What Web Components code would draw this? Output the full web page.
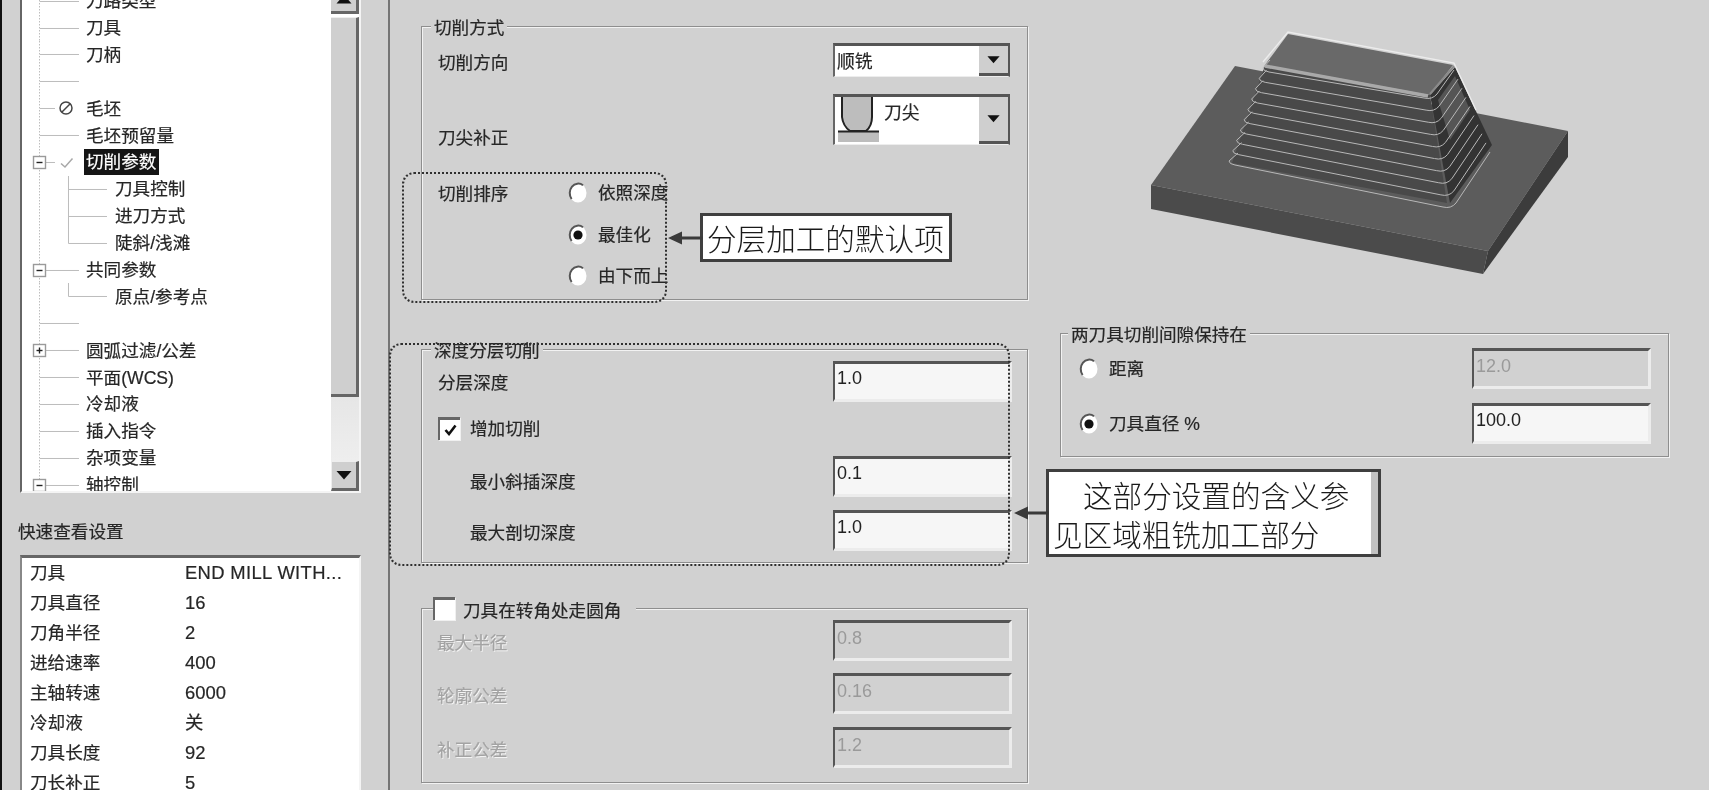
<!DOCTYPE html>
<html lang="zh"><head><meta charset="utf-8"><title>切削参数</title>
<style>
html,body{margin:0;padding:0;height:790px;overflow:hidden;background:#d1d1d1}
</style></head><body>
<cam-app>
  <cam-sidebar slot="side">
    <cam-tree>
      <cam-row text="刀路类型"></cam-row>
      <cam-row text="刀具"></cam-row>
      <cam-row text="刀柄"></cam-row>
      <cam-row></cam-row>
      <cam-row text="毛坯" icon="ban"></cam-row>
      <cam-row text="毛坯预留量"></cam-row>
      <cam-row text="切削参数" icon="check" exp="minus" selected></cam-row>
      <cam-row text="刀具控制" level="1"></cam-row>
      <cam-row text="进刀方式" level="1"></cam-row>
      <cam-row text="陡斜/浅滩" level="1" last></cam-row>
      <cam-row text="共同参数" exp="minus"></cam-row>
      <cam-row text="原点/参考点" level="1" last></cam-row>
      <cam-row></cam-row>
      <cam-row text="圆弧过滤/公差" exp="plus"></cam-row>
      <cam-row text="平面(WCS)"></cam-row>
      <cam-row text="冷却液"></cam-row>
      <cam-row text="插入指令"></cam-row>
      <cam-row text="杂项变量"></cam-row>
      <cam-row text="轴控制" exp="minus"></cam-row>
    </cam-tree>
    <span slot="title">快速查看设置</span>
    <cam-list>
      <cam-item name="刀具" value="END MILL WITH..."></cam-item>
      <cam-item name="刀具直径" value="16"></cam-item>
      <cam-item name="刀角半径" value="2"></cam-item>
      <cam-item name="进给速率" value="400"></cam-item>
      <cam-item name="主轴转速" value="6000"></cam-item>
      <cam-item name="冷却液" value="关"></cam-item>
      <cam-item name="刀具长度" value="92"></cam-item>
      <cam-item name="刀长补正" value="5"></cam-item>
    </cam-list>
  </cam-sidebar>
  <cam-main slot="main">
    <div slot="left">
      <cam-group legend="切削方式" h="274" style="--pt:16px">
        <cam-field pad="16" h="34" shift="5" label="切削方向"><cam-select slot="control" text="顺铣" h="34"></cam-select></cam-field>
        <cam-field pad="16" h="51" mt="17" valign="end" drop="2" label="刀尖补正"><cam-select slot="control" text="刀尖" h="51" tip></cam-select></cam-field>
        <cam-sort>
          <span slot="label">切削排序</span>
          <cam-radio>依照深度</cam-radio>
          <cam-radio checked style="margin-top:18px">最佳化</cam-radio>
          <cam-radio style="margin-top:17px">由下而上</cam-radio>
        </cam-sort>
      </cam-group>
      <cam-group legend="深度分层切削" h="214" style="--pt:11px;--mt:49px">
        <cam-field pad="16" h="41" shift="2" label="分层深度"><cam-input slot="control" value="1.0"></cam-input></cam-field>
        <cam-check checked mt="15" ml="16">增加切削</cam-check>
        <cam-field pad="48" h="41" mt="16" shift="10" label="最小斜插深度"><cam-input slot="control" value="0.1"></cam-input></cam-field>
        <cam-field pad="48" h="41" mt="13" shift="5" label="最大剖切深度"><cam-input slot="control" value="1.0"></cam-input></cam-field>
      </cam-group>
      <cam-group h="175" style="--pt:0px;--mt:45px">
        <cam-check slot="legend-el" label-shift="5" gap="8">刀具在转角处走圆角</cam-check>
        <cam-field pad="15" h="41" shift="5" disabled label="最大半径"><cam-input slot="control" value="0.8" disabled></cam-input></cam-field>
        <cam-field pad="15" h="41" mt="12" shift="5" disabled label="轮廓公差"><cam-input slot="control" value="0.16" disabled></cam-input></cam-field>
        <cam-field pad="15" h="41" mt="13" shift="5" disabled label="补正公差"><cam-input slot="control" value="1.2" disabled></cam-input></cam-field>
      </cam-group>
    </div>
    <div slot="right">
      <cam-part></cam-part>
      <cam-group legend="两刀具切削间隙保持在" h="124" w="609" style="--pt:14px;--lgx:7px">
        <cam-field pad="18" h="41"><cam-radio>距离</cam-radio><cam-input slot="control" value="12.0" disabled></cam-input></cam-field>
        <cam-field pad="18" h="41" mt="14"><cam-radio checked>刀具直径 %</cam-radio><cam-input slot="control" value="100.0"></cam-input></cam-field>
      </cam-group>
    </div>
    <cam-dashed slot="over" style="left:12px;top:172px;width:265px;height:131px"></cam-dashed>
    <cam-dashed slot="over" style="left:-1px;top:343px;width:621px;height:223px"></cam-dashed>
    <cam-callout slot="over" style="left:310px;top:213px;width:252px;height:49px">分层加工的默认项</cam-callout>
    <cam-callout slot="over" band style="left:656px;top:469px;width:335px;height:88px"><span style="padding-left:30px">这部分设置的含义参</span><br>见区域粗铣加工部分</cam-callout>
  </cam-main>
</cam-app>
<script>
const FONT='"Liberation Sans","Noto Sans CJK SC",sans-serif';
const LINE='#bdbdbd';
function def(name,render,after){
  customElements.define(name,class extends HTMLElement{
    connectedCallback(){
      if(this.shadowRoot)return;
      const r=this.attachShadow({mode:'open'});
      r.innerHTML=render(this);
      if(after)after(this,r);
    }
  });
}
const a=(el,n,d='')=>el.hasAttribute(n)?el.getAttribute(n):d;

def('cam-app',()=>`<style>
:host{display:flex;width:1709px;height:790px;overflow:hidden;background:#d1d1d1;color:#262626;
font:17.6px/18px ${FONT};filter:blur(.45px);-webkit-text-stroke:.2px currentColor}
.strip{width:2px;background:#111;flex:none}
.rule{width:2px;background:#757575;flex:none}
</style><div class="strip"></div><slot name="side"></slot><div class="rule"></div><slot name="main"></slot>`);

def('cam-sidebar',()=>`<style>
:host{display:block;width:386px;flex:none;padding-left:18px;box-sizing:border-box;margin-top:-12.4px}
.title{margin:30px 0 14px -2px;height:18px;white-space:nowrap}
</style><slot name="t"></slot><div class="title"><slot name="title"></slot></div><slot name="l"></slot>`,(el)=>{
  el.querySelector('cam-tree').slot='t';
  el.querySelector('cam-list').slot='l';
});

const up=`<svg width="16" height="9" viewBox="0 0 16 9"><path d="M8 0 15.5 8.5H.5Z" fill="#111"/></svg>`;
const down=`<svg width="16" height="9" viewBox="0 0 16 9"><path d="M8 8.5 15.5 0H.5Z" fill="#111"/></svg>`;
def('cam-tree',()=>`<style>
:host{display:flex;width:341px;height:505.4px;background:#fff;box-sizing:border-box;border-left:2px solid #666;border-right:2px solid #f4f4f4;border-bottom:2px solid #f4f4f4;overflow:hidden}
.rows{flex:1;min-width:0;overflow:hidden}
.bar{width:28px;flex:none;display:flex;flex-direction:column;background:#fff}
.btn{background:#cfcfcf;border-right:3px solid #666;border-bottom:3px solid #666;box-sizing:border-box;display:flex;justify-content:center;flex:none}
.u{height:26.4px;align-items:flex-end;padding-bottom:7px}
.thumb{margin-top:3px;height:380px;background:#cfcfcf;border-right:3px solid #666;border-bottom:3px solid #666;box-sizing:border-box;flex:none;border-top:1px solid #eee}
.track{flex:1;background:linear-gradient(#e6e6e6,#eeeeee)}
.d{height:30px;align-items:center;border-top:1px solid #eee;border-left:1px solid #eee}
</style><div class="rows"><slot></slot></div>
<div class="bar"><div class="btn u">${up}</div><div class="thumb"></div><div class="track"></div><div class="btn d">${down}</div></div>`);

def('cam-row',el=>{
  const lvl=+a(el,'level','0'),t=a(el,'text'),exp=a(el,'exp'),ic=a(el,'icon'),sel=el.hasAttribute('selected'),last=el.hasAttribute('last');
  const w=lvl?91:62,h=26.9,m=13.5;
  let s=`<path d="M17.5 0V27" stroke="${LINE}" stroke-dasharray="1.5 1.5" fill="none"/>`;
  if(lvl)s+=`<path d="M46.5 0V${last?m:27}M46.5 ${m}H85" stroke="${LINE}" fill="none"/>`;
  else s+=`<path d="M18 ${m}H${ic?33:57}" stroke="${LINE}" fill="none"/>`;
  if(exp){
    s+=`<rect x="11.5" y="7.5" width="12" height="12" fill="#fff" stroke="#9a9a9a" stroke-width="1.4"/><path d="M14.5 ${m}H20.5" stroke="#222" stroke-width="1.4"/>`;
    if(exp==='plus')s+=`<path d="M17.5 10.5V16.5" stroke="#222" stroke-width="1.4"/>`;
  }
  if(ic==='ban')s+=`<circle cx="44" cy="13" r="6" fill="none" stroke="#444" stroke-width="1.5"/><path d="M40 17 48 9" stroke="#444" stroke-width="1.5"/>`;
  if(ic==='check')s+=`<path d="M39 14.5 43 18 50.5 9.5" fill="none" stroke="#a8a8a8" stroke-width="1.5"/>`;
  return `<style>
:host{display:flex;height:${h}px;align-items:center;white-space:nowrap}
svg{flex:none;display:block}
.t{padding:0 3px 0 2px;line-height:26px;height:26px}
.sel{background:#151515;color:#fff}
</style><svg width="${w}" height="${h}" viewBox="0 0 ${w} ${h}">${s}</svg>${t?`<span class="t ${sel?'sel':''}">${t}</span>`:''}`;
});

def('cam-list',()=>`<style>
:host{display:block;width:341px;height:300px;background:#fff;box-sizing:border-box;border-top:3px solid #666;border-left:2px solid #888;border-right:2px solid #f4f4f4;padding-left:8px}
</style><slot></slot>`);
def('cam-item',el=>`<style>
:host{display:grid;grid-template-columns:155px 1fr;height:30px;align-items:center;white-space:nowrap}
.v{font-size:18.4px;${a(el,'value').length>6?'letter-spacing:.35px;':''}}
</style><span>${a(el,'name')}</span><span class="v">${a(el,'value')}</span>`);

def('cam-main',()=>`<style>
:host{display:flex;position:relative;flex:1;min-width:0;padding-left:31px;box-sizing:border-box;gap:32px;align-items:flex-start}
::slotted([slot=left]){width:607px;flex:none;padding-top:26px}
::slotted([slot=right]){width:609px;flex:none}
</style><slot name="left"></slot><slot name="right"></slot><slot name="over"></slot>`);

def('cam-group',el=>{
  const l=a(el,'legend');
  return `<style>
:host{display:block;box-sizing:border-box;height:${a(el,'h')}px;${el.hasAttribute('w')?'':'width:607px;'}margin-top:var(--mt,0);
border:1px solid #8e8e8e;box-shadow:1px 1px 0 #f2f2f2,inset 1px 1px 0 #f2f2f2}
.lg{display:table;background:#d1d1d1;line-height:18px;height:18px;padding:0 3px;margin:-8px 0 -10px var(--lgx,9px);white-space:nowrap}
.le{display:table;background:#d1d1d1;margin:-12px 0 0 11px;padding-right:15px}
.body{padding-top:var(--pt,0)}
</style>${l?`<div class="lg">${l}</div>`:`<div class="le"><slot name="legend-el"></slot></div>`}<div class="body"><slot></slot></div>`;
});

def('cam-field',el=>{
  const dis=el.hasAttribute('disabled'),v=a(el,'valign','center');
  return `<style>
:host{display:grid;grid-template-columns:411px 179px;height:${a(el,'h')}px;margin-top:${a(el,'mt','0')}px;white-space:nowrap}
.l{padding-left:${a(el,'pad','16')}px;padding-top:${a(el,'shift','0')}px;display:flex;align-items:${v==='end'?'flex-end':'center'};box-sizing:border-box;margin-bottom:-${a(el,'drop','0')}px;
${dis?'color:#a3a3a3;text-shadow:1px 1px 0 #f4f4f4;':''}}
</style><div class="l">${a(el,'label')}<slot></slot></div><slot name="control"></slot>`;
});

def('cam-input',el=>{
  const dis=el.hasAttribute('disabled');
  return `<style>
:host{display:block;box-sizing:border-box;height:41px;width:179px;border-top:3px solid #555;border-left:2px solid #555;border-right:3px solid #ececec;border-bottom:3px solid #ececec;
background:${dis?'#d1d1d1':'#f6f6f6'};color:${dis?'#9a9a9a':'#222'};font-size:18px;line-height:20px;padding:${dis?5:4}px 0 0 2px;-webkit-text-stroke:0}
</style>${a(el,'value')}`;
});

def('cam-select',el=>{
  const tip=el.hasAttribute('tip'),h=+a(el,'h','34');
  const icon=tip?`<svg width="41" height="45" viewBox="0 0 41 45" style="flex:none;display:block">
<rect width="41" height="45" fill="#fff"/><rect y="35" width="41" height="10" fill="#bdbdbd"/>
<path d="M4 0V20Q5 29 12 34H28Q34 29 34 20V0Z" fill="#bdbdbd"/>
<path d="M4 0V20Q5 29 12 34H28Q34 29 34 20V0" fill="none" stroke="#222" stroke-width="2"/>
<path d="M0 34.5H41" fill="none" stroke="#222" stroke-width="2"/></svg>`:'';
  return `<style>
:host{display:flex;box-sizing:border-box;height:${h}px;width:177px;background:#fff;border-top:3px solid #555;border-left:2px solid #666;border-right:2px solid #555;border-bottom:1px solid #ededed}
.t{flex:1;display:flex;gap:5px;padding-left:${tip?3:2}px;line-height:18px;align-items:${tip?'flex-start':'center'};font-size:17.8px;white-space:nowrap}
.s{padding-top:${tip?7:2}px}
.b{width:29px;flex:none;background:#cfcfcf;border-bottom:3px solid #555;display:flex;align-items:center;justify-content:center;box-sizing:border-box}
</style><div class="t">${icon}<span class="s">${a(el,'text')}</span></div><div class="b">${down.replace('width="16"','width="13"').replace('height="9"','height="8"')}</div>`;
});

def('cam-radio',el=>{
  const on=el.hasAttribute('checked');
  return `<style>
:host{display:flex;align-items:center;gap:10px;height:24px;white-space:nowrap;font-size:17.6px}
svg{flex:none;display:block}
</style><svg width="20" height="22" viewBox="0 0 20 22"><ellipse cx="10" cy="11" rx="8.5" ry="9.5" fill="#fff"/>
<path d="M15 3.2A8.5 9.5 0 0 0 3.6 17" fill="none" stroke="#555" stroke-width="2"/>
${on?'<circle cx="10" cy="11" r="4.6" fill="#111"/>':''}</svg><span><slot></slot></span>`;
});

def('cam-check',el=>{
  const on=el.hasAttribute('checked');
  return `<style>
:host{display:flex;align-items:center;gap:${a(el,'gap','10')}px;height:23px;margin-top:${a(el,'mt','0')}px;margin-left:${a(el,'ml','0')}px;white-space:nowrap}
.b{width:22px;height:23px;flex:none;box-sizing:border-box;background:#fff;border-top:3px solid #666;border-left:2px solid #666;display:flex;align-items:center;justify-content:center;box-shadow:1px 1px 0 #f0f0f0}
svg{display:block}
span.l{padding-top:${a(el,'label-shift','0')}px}
</style><div class="b">${on?'<svg width="13" height="12" viewBox="0 0 13 12"><path d="M1.5 6 5 10 11.5 1.5" fill="none" stroke="#111" stroke-width="2.6"/></svg>':''}</div><span class="l"><slot></slot></span>`;
});

def('cam-sort',()=>`<style>
:host{display:grid;grid-template-columns:130px 1fr;margin-top:36px;padding-left:16px;box-sizing:border-box;width:260px;height:100px;white-space:nowrap}
.l{padding-top:4px}
.r{display:flex;flex-direction:column}
</style><div class="l"><slot name="label"></slot></div><div class="r"><slot></slot></div>`);

def('cam-dashed',()=>`<style>
:host{position:absolute;box-sizing:border-box;border:2px dotted #2f2f2f;border-radius:12px;pointer-events:none}
</style>`);

def('cam-callout',el=>`<style>
:host{position:absolute;box-sizing:border-box;background:#fff;border:3px solid #3f3f3f;-webkit-text-stroke:0;
${el.hasAttribute('band')?'box-shadow:inset -7px 0 0 #c2c2c2;':''}
font:300 29.6px/39px "Noto Sans CJK SC",sans-serif;color:#1a1a1a;padding:${el.hasAttribute('band')?'3px 0 0 4px':'2px 0 0 4px'};white-space:nowrap}
.arrow{position:absolute;right:100%;top:50%;width:35px;height:16px;margin-top:-8px}
</style><svg class="arrow" viewBox="0 0 35 16"><path d="M0 8 14 1.5V6.5H35V9.5H14V14.5Z" fill="#3a3a3a"/></svg><slot></slot>`);

def('cam-part',()=>{
  let lines='';
  for(let i=0;i<10;i++){
    const t=i/9,lerp=(p,q)=>p+(q-p)*t;
    const bx=lerp(150,118),by=lerp(50,143);
    const lx=lerp(144,110),ly=lerp(60,153);
    const fx=lerp(312,331),fy=lerp(90,199);
    const rx=lerp(334,370),ry=lerp(60,142);
    lines+=`<path d="M${bx} ${by}L${lx-1} ${ly-2}Q${lx-1} ${ly+1} ${lx+5} ${ly+2}L${fx-8} ${fy-2}Q${fx} ${fy} ${fx+5} ${fy-6}L${rx} ${ry}" />`;
  }
  return `<style>
:host{display:block;width:480px;height:280px;margin:10px 0 43px 60px}
svg{display:block}
</style><svg width="480" height="280" viewBox="0 0 480 280">
<path d="M31 175 115 56 448 121 368 241Z" fill="#5c5c5c"/>
<path d="M31 175 368 241 363 264 31 199Z" fill="#4b4b4b"/>
<path d="M368 241 448 121V147L363 264Z" fill="#3c3c3c"/>
<path d="M145 55 168 24 333 55 310 85Z" fill="#696969"/>
<path d="M145 55 310 85 327 193 112 153Z" fill="#494949"/>
<path d="M310 85 335 57 372 135 330 193Z" fill="#333"/>
<path d="M318 90 335 66 350 100 330 130Z" fill="#555"/>
<path d="M145 56 308 86" stroke="#a9a9a9" stroke-width="3.5" fill="none"/>
<path d="M310 84 334 56" stroke="#8a8a8a" stroke-width="2" fill="none"/>
<path d="M143 52 168 22 334 53 356 100" stroke="#ececec" stroke-width="1.4" fill="none"/>
<g fill="none" stroke="#b8b8b8" stroke-width="1" stroke-linejoin="round">${lines}</g>
</svg>`;
});
</script>
</body></html>
